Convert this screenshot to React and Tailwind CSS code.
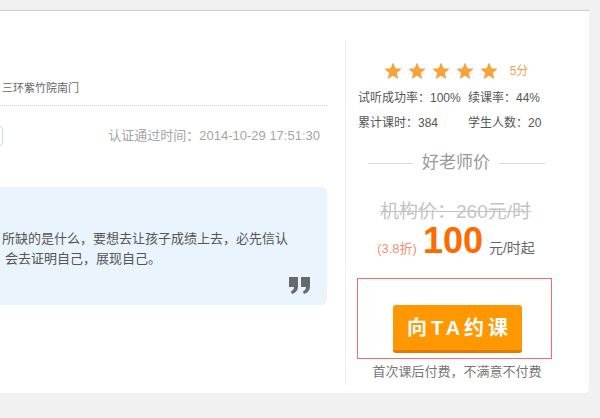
import React from 'react';

const font = { fontFamily: '"Liberation Sans", "Noto Sans CJK SC", sans-serif' };

function Star() {
  return (
    <svg width="18" height="18" viewBox="0 0 24 24" className="block">
      <path d="M12 0.8L15.23 8.35L23.41 9.09L17.23 14.5L19.05 22.51L12 18.3L4.95 22.51L6.77 14.5L0.59 9.09L8.77 8.35Z" fill="#f7a23b" />
    </svg>
  );
}

function QuoteMark() {
  return (
    <svg width="22" height="17" viewBox="0 0 22 17" className="block">
      <path d="M0 0h9v9.5c0 3.8-2.4 6.5-6.2 7.5L2 14.2c2-0.8 3-2.2 3-4.2H0z" fill="#666a70" />
      <path d="M12 0h9v9.5c0 3.8-2.4 6.5-6.2 7.5L14 14.2c2-0.8 3-2.2 3-4.2h-5z" fill="#666a70" />
    </svg>
  );
}

export default function App() {
  return (
    <div className="w-[600px] h-[418px] overflow-hidden bg-[#f1f1f1] pt-[10px]" style={font}>
      <div className="w-[589px] h-[383px] bg-white border-t border-[#c9c9c9] rounded-br-[5px] flex">
        {/* left column */}
        <div className="w-[345px] pr-[18px] overflow-hidden">
          <div className="mt-[67px] h-[20px] leading-[20px] text-[11px] text-[#666] pl-[2px]">三环紫竹院南门</div>
          <div className="mt-[7px] border-b border-dotted border-[#cfcfcf]" />
          <div className="mt-[20px] h-[20px] flex items-center justify-between">
            <div className="w-[40px] h-[20px] -ml-[37px] border border-[#c5dcf1] rounded-[3px]" />
            <div className="text-[13px] text-[#a5a5a5] pr-[7px]">认证通过时间：2014-10-29 17:51:30</div>
          </div>
          <div className="mt-[41px] h-[118px] bg-[#e9f4fd] rounded-r-[6px] pt-[42px] pr-[16px] text-[13px] text-[#555] leading-[20px] overflow-hidden">
            <div className="pl-[2px] whitespace-nowrap">所缺的是什么，要想去让孩子成绩上去，必先信认</div>
            <div className="pl-[5px] whitespace-nowrap">会去证明自己，展现自己。</div>
            <div className="mt-[8px] flex justify-end">
              <QuoteMark />
            </div>
          </div>
        </div>

        {/* right column */}
        <div className="w-[244px] mt-[29px] mb-[7px] border-l border-[#f0f0f7] pl-[11px]">
          <div className="w-[195px] flex flex-col items-center">
            <div className="mt-[22px] flex items-center h-[18px] pl-[3px]">
              <div className="flex gap-[6px]">
                <Star /><Star /><Star /><Star /><Star />
              </div>
              <span className="ml-[12px] text-[12px] text-[#f9a052]">5分</span>
            </div>
            <div className="mt-[6px] w-full text-[12px] text-[#555] leading-[25px]">
              <div className="flex"><span className="w-[111px] pl-[1px]">试听成功率：100%</span><span>续课率：44%</span></div>
              <div className="flex"><span className="w-[111px] pl-[1px]">累计课时：384</span><span>学生人数：20</span></div>
            </div>
            <div className="mt-[15px] h-[24px] flex items-center gap-[9px] pl-[4px]">
              <div className="w-[45px] h-px bg-[#dcdcdc]" />
              <span className="text-[17px] text-[#9a9a9a]">好老师价</span>
              <div className="w-[46px] h-px bg-[#dcdcdc]" />
            </div>
            <div className="mt-[25px] h-[24px] leading-[24px] text-[19px] text-[#c4c4c4] line-through pl-[2px]">机构价：260元/时</div>
            <div className="-mt-[1px] h-[36px] flex items-baseline pl-[3px]">
              <span className="text-[13px] text-[#f98f6f]">(3.8折)</span>
              <span className="ml-[6px] text-[36px] leading-[36px] font-bold text-[#ff6a00]">100</span>
              <span className="ml-[6px] text-[14px] text-[#666]">元/时起</span>
            </div>
            <div className="mt-[19px] w-[195px] h-[81px] border border-[#f36d6d] pt-[26px]">
              <button className="ml-[35px] w-[129px] h-[48px] bg-[#ff9700] border-b-[3px] border-[#e07b00] rounded-[3px] text-white text-[20px] font-bold tracking-[4px] pl-[4px]">
                向TA约课
              </button>
            </div>
            <div className="mt-[5px] leading-[16px] text-[13px] text-[#777] pl-[5px]">首次课后付费，不满意不付费</div>
          </div>
        </div>
      </div>
    </div>
  );
}
